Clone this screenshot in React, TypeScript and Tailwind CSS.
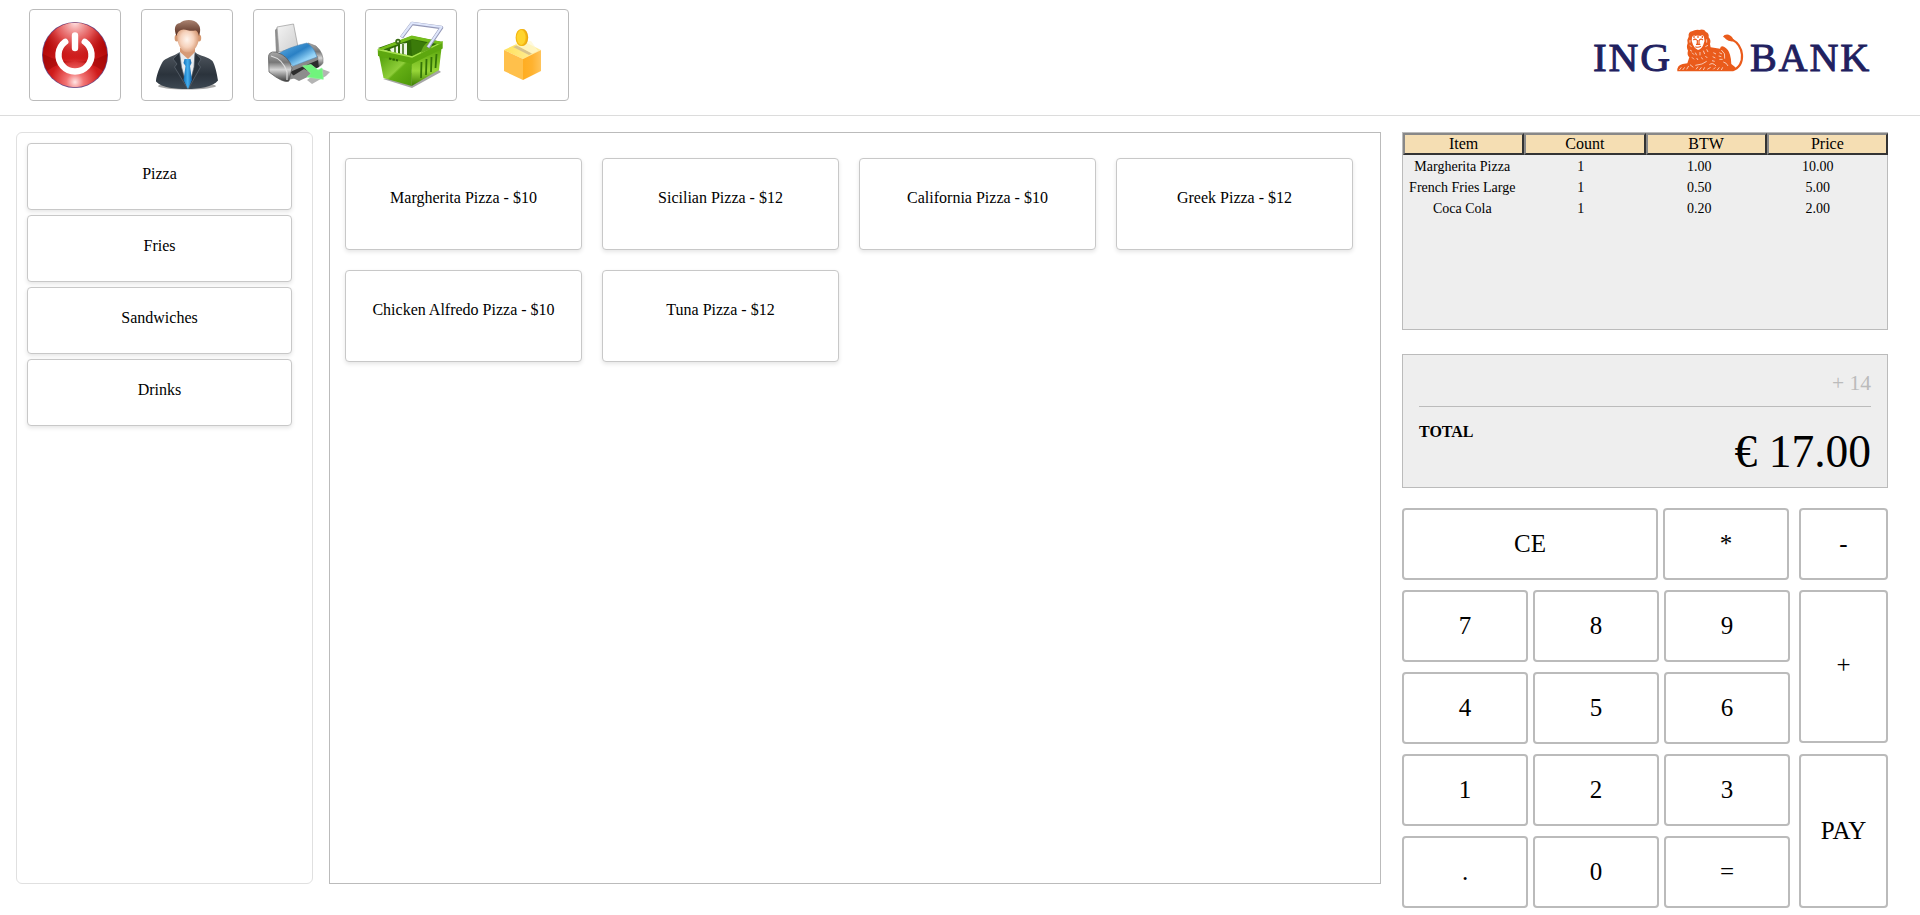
import React from "react";

const border = "border-[#bbb]";

function PowerIcon() {
  return (
    <svg viewBox="0 0 90 90" className="size-[90px]">
      <defs>
        <radialGradient id="pw" cx="50%" cy="92%" r="75%">
          <stop offset="0" stopColor="#ffe6e6" />
          <stop offset=".18" stopColor="#f27474" />
          <stop offset=".5" stopColor="#d01c1c" />
          <stop offset="1" stopColor="#ad0606" />
        </radialGradient>
        <radialGradient id="pw2" cx="50%" cy="0%" r="60%">
          <stop offset="0" stopColor="#ffdede" />
          <stop offset=".5" stopColor="#e66" stopOpacity=".8" />
          <stop offset="1" stopColor="#c11" stopOpacity="0" />
        </radialGradient>
      </defs>
      <circle cx="45" cy="45" r="33" fill="#6b4a86" />
      <circle cx="45" cy="45" r="32.2" fill="url(#pw)" />
      <circle cx="45" cy="45" r="32.2" fill="url(#pw2)" />
      <path d="M13 44Q28 52 45 52T77.2 44A32.300 32.300 0 0 1 73 61Q60 51 45 52Q30 51 17 61A32.300 32.300 0 0 1 13 44Z" fill="#8c0000" opacity=".4" />
      <path d="M35.200 31.800A16.500 16.500 0 1 0 54.800 31.800" fill="none" stroke="#fff" strokeWidth="6.400" strokeLinecap="round" />
      <path d="M45 25.500V38" stroke="#fff" strokeWidth="6.400" strokeLinecap="round" />
    </svg>
  );
}

function UserIcon() {
  return (
    <svg viewBox="0 0 90 90" className="size-[90px]">
      <defs>
        <linearGradient id="suit" x1="0" y1="0" x2="0" y2="1">
          <stop offset="0" stopColor="#50575f" />
          <stop offset=".6" stopColor="#2b333c" />
          <stop offset="1" stopColor="#3d4852" />
        </linearGradient>
        <radialGradient id="face" cx="45%" cy="50%" r="60%">
          <stop offset="0" stopColor="#fff5ee" />
          <stop offset=".5" stopColor="#f6d2bc" />
          <stop offset="1" stopColor="#cf8d66" />
        </radialGradient>
        <linearGradient id="hair" x1="0" y1="0" x2="0" y2="1">
          <stop offset="0" stopColor="#a98270" />
          <stop offset="1" stopColor="#54291b" />
        </linearGradient>
        <linearGradient id="tie" x1="0" y1="0" x2="1" y2="0">
          <stop offset="0" stopColor="#1470b8" />
          <stop offset=".5" stopColor="#45b0ef" />
          <stop offset="1" stopColor="#0f5fa5" />
        </linearGradient>
      </defs>
      <ellipse cx="45" cy="76" rx="29" ry="3.500" fill="#000" opacity=".35" />
      <path d="M38 38H53V46L46 52L38 46Z" fill="#d69a76" />
      <path d="M38 42L36 46L45 78L55 46L53 42L46 49Z" fill="#e9ecef" />
      <path d="M37 42.500C32 46 23 48 20.500 52C16 60 14 68 14 71.500C20 78 34 79 45 79C57 79 71 77 76 70.500C75 64 73 55 70.500 51C67 47 58 46 53 42.500L52.500 58L46 78.500L39 58Z" fill="url(#suit)" />
      <path d="M37.500 42.500L31 49L35 54L32.500 57L45.500 78.500L39.500 57ZM53 42.500L59 49L56 54L58.500 57L46.500 78.500L52 57Z" fill="#29313a" stroke="#606972" strokeWidth=".7" />
      <path d="M42.500 49H48.500L49.500 53L48 56L50 70L46 79L41.500 70L43.500 56L41.500 53Z" fill="url(#tie)" />
      <ellipse cx="34.800" cy="28" rx="2.200" ry="3.500" fill="#d49871" />
      <ellipse cx="57" cy="28" rx="2.200" ry="3.500" fill="#d49871" />
      <path d="M35.500 20C34.500 30 36 36 41 41C44 43 48 43 51 41C56 36 58 30 56.500 20Q46 13 35.500 20Z" fill="url(#face)" />
      <path d="M34.500 26C32 20 32 14 38 13C42 9 53 9 56 14C59 17 58.500 22 57 26C56 22 55 20.500 53 20.500C47 22 43 18 39 20C36 21 35.500 23 34.500 26Z" fill="url(#hair)" />
    </svg>
  );
}

function PrinterIcon() {
  return (
    <svg viewBox="0 0 90 90" className="size-[90px]">
      <defs>
        <linearGradient id="pm" x1="0" y1="0" x2="0" y2="1">
          <stop offset="0" stopColor="#a8a8a8" />
          <stop offset=".35" stopColor="#777" />
          <stop offset=".6" stopColor="#d6d6d6" />
          <stop offset="1" stopColor="#3a3a3a" />
        </linearGradient>
        <linearGradient id="pb" x1="0" y1="0" x2="1" y2="1">
          <stop offset="0" stopColor="#67b5ea" />
          <stop offset=".45" stopColor="#2a80c4" />
          <stop offset=".7" stopColor="#8fd0f5" />
          <stop offset="1" stopColor="#e5f5ff" />
        </linearGradient>
        <linearGradient id="pp" x1="0" y1="0" x2="1" y2="1">
          <stop offset="0" stopColor="#f4f4f4" />
          <stop offset="1" stopColor="#cfcfcf" />
        </linearGradient>
      </defs>
      <path d="M21 20L24 17L26 42L22 43Z" fill="#8d8d8d" />
      <path d="M23 17L39.500 14L44 37L25 42Z" fill="url(#pp)" stroke="#999" strokeWidth=".7" />
      <path d="M54 33L62 36Q70 43 69 53Q67 57 60 58Z" fill="url(#pm)" stroke="#777" strokeWidth=".6" />
      <path d="M34 58L64 46L65 56L42 68L34 70Z" fill="#8a8a8a" />
      <path d="M36 62L64 50L65 57L42 68Z" fill="#2d2d2d" />
      <path d="M37 67L50 59L60 64L45 71Z" fill="#8d8d8d" />
      <path d="M53 70L68 59L76 62L72 66L58 74Z" fill="#b4b4b4" />
      <path d="M24 44Q35 37 53 33Q60 37 63 47L39 56Q31 49 24 44Z" fill="url(#pb)" stroke="#4b87b5" strokeWidth=".6" />
      <path d="M14.500 48Q14 41 22 42Q35 46 38 58L35 71Q30 74 15 62Z" fill="url(#pm)" stroke="#555" strokeWidth=".7" />
      <path d="M17 46Q29 49 33 62V70" fill="none" stroke="#ddd" strokeWidth="1.200" />
      <path d="M48.500 56L57 54.500L64 60L68 58L69.300 69.300L53 67L57 63.500Z" fill="#70f47d" stroke="#8df798" strokeWidth=".7" />
    </svg>
  );
}

function BasketIcon() {
  return (
    <svg viewBox="0 0 90 90" className="size-[90px]">
      <defs>
        <linearGradient id="bk" x1="0" y1="0" x2="1" y2="1">
          <stop offset="0" stopColor="#4f9d08" />
          <stop offset=".5" stopColor="#8fce3a" />
          <stop offset=".55" stopColor="#64ae14" />
          <stop offset="1" stopColor="#4c9708" />
        </linearGradient>
        <linearGradient id="br" x1="0" y1="0" x2="0" y2="1">
          <stop offset="0" stopColor="#5aa50c" />
          <stop offset=".6" stopColor="#97d638" />
          <stop offset="1" stopColor="#3c7d02" />
        </linearGradient>
      </defs>
      <path d="M17 69L46 78L75 62L70 58Z" fill="#000" opacity=".35" />
      <path d="M12 38L46 26L76 32L46 48Z" fill="#2f6a06" />
      <path d="M24 39L32 36V44H26ZM34 34L41 33V46H34Z" fill="#eef6e6" />
      <path d="M37 34V46M29 36V44" stroke="#2f6a06" strokeWidth="1.500" />
      <path d="M45 29L60 33L68 36L46 47Z" fill="#3b7b0a" />
      <path d="M13 45L46 53L45.700 76L17.500 68Z" fill="url(#bk)" />
      <path d="M45.900 53L75.500 38L73 60L45.700 76Z" fill="url(#br)" />
      <path d="M55.500 52L55 68M60.500 49L60 65M65.500 47L65 62M70.500 44L69.500 58" stroke="#347507" strokeWidth="1.800" />
      <path d="M11.700 39L46 46L76.700 31V38.500L46 54L12 46Z" fill="#5da70f" />
      <path d="M12 39.500L46 47L76.500 32" fill="none" stroke="#a9e350" strokeWidth="1.300" />
      <path d="M11.700 39L45.700 25.500L76.700 32L74 34.500L46 29L16 40Z" fill="#74bd1b" />
      <path d="M23 48.500L32 50.500" stroke="#2c6702" strokeWidth="2.200" strokeDasharray="2.500 1" />
      <circle cx="32" cy="31.500" r="2.700" fill="#396c13" />
      <circle cx="32" cy="31.500" r="1" fill="#d9f0c0" />
      <path d="M55 43Q56 36 63 31Q67 34 65 39Z" fill="#66a91c" />
      <path d="M35.500 27.500L46 13.500L75.500 17.500L62 37.500" fill="none" stroke="#9599b8" strokeWidth="3.600" strokeLinejoin="round" />
      <path d="M35.500 27L46 13L75.500 17L62 37" fill="none" stroke="#dfe7fc" strokeWidth="2.200" strokeLinejoin="round" />
    </svg>
  );
}

function CoinBoxIcon() {
  return (
    <svg viewBox="0 0 90 90" className="size-[90px]">
      <defs>
        <linearGradient id="cb" x1="0" y1="0" x2="1" y2="0">
          <stop offset="0" stopColor="#ffad22" />
          <stop offset=".5" stopColor="#ffb22f" />
          <stop offset="1" stopColor="#ffc45b" />
        </linearGradient>
        <linearGradient id="ct" x1="0" y1="0" x2="1" y2="0">
          <stop offset="0" stopColor="#ffe25a" />
          <stop offset="1" stopColor="#fff0a8" />
        </linearGradient>
      </defs>
      <path d="M26 40L45 31L63 40L45 49Z" fill="url(#ct)" />
      <path d="M35 37L51 45L54 43.500L39 35.500Z" fill="#d8c38c" />
      <path d="M37 33L53 31L60 41L54 43.500L39 35.500Z" fill="#fff8d2" opacity=".7" />
      <path d="M26 40L45 49V70L26 61Z" fill="#ffc04b" />
      <path d="M45 49L63 40V61L45 70Z" fill="url(#cb)" />
      <ellipse cx="44.700" cy="27.500" rx="5.500" ry="8.500" fill="#eba80f" />
      <ellipse cx="43.200" cy="27.500" rx="5" ry="8" fill="#ffd42e" stroke="#f5b913" strokeWidth="1.200" />
    </svg>
  );
}

function BankLogo() {
  return (
    <svg viewBox="0 0 300 80" className="h-20 w-[300px]" role="img" aria-label="ING BANK">
      <g fill="#20205f" stroke="#20205f" strokeWidth=".9" fontFamily="'Liberation Serif', serif" fontSize="40" letterSpacing="1.8">
        <text x="13" y="56" textLength="79" lengthAdjust="spacingAndGlyphs">ING</text>
        <text x="170" y="56" textLength="121" lengthAdjust="spacingAndGlyphs">BANK</text>
      </g>
      <g transform="translate(90 5) scale(.3333)">
        <path d="M186 150C208 146 218 126 216 104C214 82 204 68 186 58" fill="none" stroke="#ea5b1b" strokeWidth="6.500" />
        <path d="M159 50Q163 42 176 44Q188 48 192 64Q176 66 168 58Q164 52 159 50Z" fill="#ea5b1b" />
        <path d="M22 154Q20 136 38 132L52 130L58 112Q50 104 54 92Q48 82 53 70Q50 58 56 50Q54 36 66 34Q76 28 88 30Q102 26 108 36Q118 40 116 52Q124 60 120 72L122 82L150 86Q152 76 162 80Q176 88 180 104Q184 118 184 132L196 142Q196 150 190 154Z" fill="#ea5b1b" />
        <path d="M66 52Q70 44 76 48L83 46L91 48Q100 42 102 52Q106 62 100 74Q96 86 84 90Q74 86 69 74Q63 62 66 52Z" fill="#fff" />
        <g fill="none" stroke="#ea5b1b" strokeWidth="3.600">
          <path d="M70 60Q75 55 80 60M88 60Q93 55 99 60M82 60V72M87 60V72M78 73H91M76 80Q84 84 93 79" />
          <path d="M72 48V54M84 46V54M97 48V54" />
        </g>
        <g fill="none" stroke="#fff" strokeWidth="2">
          <path d="M60 60V68M59 76L65 80M110 58V68M106 80L114 76M60 90L66 94M66 98L72 104M76 98L80 106M90 96V106M100 92L104 102M110 88L114 96M66 112L72 118M80 114L84 120M94 112L98 118M106 108L112 114" />
          <path d="M154 90Q168 100 164 116M148 98L156 102M146 108L154 110M148 118L158 118M130 98L138 102M128 110L136 114M126 122L134 124M160 126Q170 128 174 138" />
          <path d="M28 150L34 142M38 150L44 142M50 148L56 138M60 134L70 142M78 148L84 140M88 150L94 142M100 150L104 142M76 136L96 132L110 124M118 134Q128 126 138 138M130 148L136 142M142 150L148 142M154 150L158 142M112 148L122 142" />
        </g>
      </g>
    </svg>
  );
}

const tools = [PowerIcon, UserIcon, PrinterIcon, BasketIcon, CoinBoxIcon];
const categories = ["Pizza", "Fries", "Sandwiches", "Drinks"];
const products = [
  "Margherita Pizza - $10",
  "Sicilian Pizza - $12",
  "California Pizza - $10",
  "Greek Pizza - $12",
  "Chicken Alfredo Pizza - $10",
  "Tuna Pizza - $12",
];
const rows = [
  ["Margherita Pizza", "1", "1.00", "10.00"],
  ["French Fries Large", "1", "0.50", "5.00"],
  ["Coca Cola", "1", "0.20", "2.00"],
];
const digitRows = [
  ["7", "8", "9"],
  ["4", "5", "6"],
  ["1", "2", "3"],
  [".", "0", "="],
];

function Key({ label, size }: { label: string; size: string }) {
  return (
    <button className={`flex shrink-0 items-center justify-center rounded-[4px] border-2 bg-white text-[25px] ${border} ${size}`}>
      {label}
    </button>
  );
}

export default function App() {
  return (
    <div className="h-[915px] w-[1920px] overflow-hidden bg-white font-['Liberation_Serif',serif] text-base text-black">
      <header className="flex h-[116px] justify-between border-b border-[#dcdcdc] pt-[9px] pr-10 pl-[29px]">
        <div className="flex gap-5">
          {tools.map((Icon, i) => (
            <button key={i} className={`size-[92px] rounded-[4px] border ${border}`}>
              <Icon />
            </button>
          ))}
        </div>
        <div className="mt-[6px]">
          <BankLogo />
        </div>
      </header>

      <div className="flex items-start pt-4 pl-4">
        <nav className="flex h-[752px] w-[297px] flex-col gap-[5px] rounded-md border border-[#e0e0e0] px-[10px] pt-[10px]">
          {categories.map((c) => (
            <button key={c} className="h-[67px] w-[265px] rounded-[4px] border border-[#c8c8c8] bg-white pb-[6px] shadow-[0_2px_4px_rgba(0,0,0,0.1)]">
              {c}
            </button>
          ))}
        </nav>

        <main className={`ml-4 h-[752px] w-[1052px] border pt-[25px] pl-[15px] ${border}`}>
          <div className="flex flex-wrap gap-5">
            {products.map((p) => (
              <button key={p} className="h-[92px] w-[237px] rounded-[4px] border border-[#c8c8c8] bg-white pb-3 shadow-[0_2px_4px_rgba(0,0,0,0.1)]">
                {p}
              </button>
            ))}
          </div>
        </main>

        <aside className="ml-[21px] w-[486px]">
          <section className={`h-[198px] border bg-[#eee] ${border}`}>
            <div className="flex w-[485px]">
              {["Item", "Count", "BTW", "Price"].map((h) => (
                <div key={h} className="h-[22px] flex-1 border-2 border-t-[#888] border-r-[#333] border-b-[#333] border-l-[#888] bg-[#f5deb3] text-center leading-[18px]">
                  {h}
                </div>
              ))}
            </div>
            <div className="w-[474px]">
              {rows.map((r) => (
                <div key={r[0]} className="flex h-[21px] text-sm leading-6">
                  {r.map((v, i) => (
                    <span key={i} className="w-[118.5px] text-center">
                      {v}
                    </span>
                  ))}
                </div>
              ))}
            </div>
          </section>

          <section className={`mt-6 h-[134px] border bg-[#eee] px-4 ${border}`}>
            <div className={`flex h-[52px] items-end justify-end border-b pb-[11px] text-[21.5px] leading-6 text-[#bbb] ${border}`}>+ 14</div>
            <div className="flex justify-between">
              <span className="pt-4 font-bold leading-[18px]">TOTAL</span>
              <span className="pt-[19px] text-[45.5px] leading-[52px]">€ 17.00</span>
            </div>
          </section>

          <section className="mt-5 flex justify-between">
            <div className="flex flex-col gap-[10px]">
              <div className="flex gap-[5px]">
                <Key label="CE" size="h-[72px] w-[256px]" />
                <Key label="*" size="h-[72px] w-[126px]" />
              </div>
              {digitRows.map((r) => (
                <div key={r[0]} className="flex gap-[5px]">
                  {r.map((d) => (
                    <Key key={d} label={d} size="h-[72px] w-[126px]" />
                  ))}
                </div>
              ))}
            </div>
            <div className="flex flex-col">
              <Key label="-" size="h-[72px] w-[89px]" />
              <Key label="+" size="mt-[10px] h-[153px] w-[89px] pb-[3px]" />
              <Key label="PAY" size="mt-[11px] h-[154px] w-[89px]" />
            </div>
          </section>
        </aside>
      </div>
    </div>
  );
}
